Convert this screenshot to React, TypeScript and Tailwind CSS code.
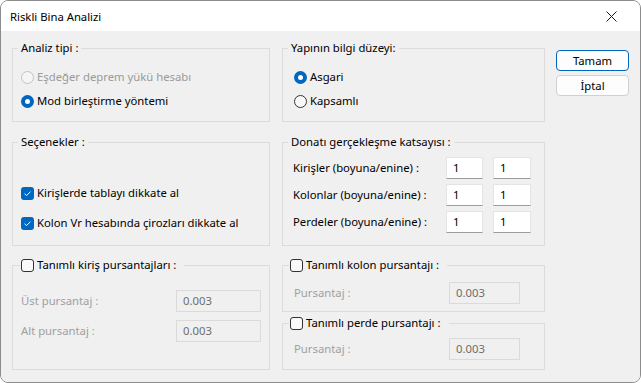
import React from "react";

const font = { fontFamily: '"Noto Sans", "Open Sans", sans-serif' };

function Radio({ checked, disabled }: { checked?: boolean; disabled?: boolean }) {
  if (checked)
    return (
      <span className="w-[13px] h-[13px] rounded-full bg-[#0067c0] flex items-center justify-center shrink-0">
        <span className="w-[5px] h-[5px] rounded-full bg-white" />
      </span>
    );
  return (
    <span
      className={
        "w-[13px] h-[13px] rounded-full border shrink-0 " +
        (disabled ? "border-[#c2c2c2] bg-[#f5f5f5]" : "border-[#333333] bg-[#f9f9f9]")
      }
    />
  );
}

function Check({ checked }: { checked?: boolean }) {
  if (checked)
    return (
      <span className="w-[13px] h-[13px] rounded-[3px] bg-[#0067c0] flex items-center justify-center shrink-0">
        <svg width="13" height="13" viewBox="0 0 13 13">
          <path d="M3.6 6.7 L5.6 8.6 L9.5 4.6" stroke="white" strokeWidth="1" fill="none" />
        </svg>
      </span>
    );
  return <span className="w-[13px] h-[13px] rounded-[3px] border border-[#333333] bg-[#f9f9f9] shrink-0" />;
}

function Field({
  children,
  legend,
  className,
  legendClass,
}: {
  children: React.ReactNode;
  legend: React.ReactNode;
  className?: string;
  legendClass?: string;
}) {
  return (
    <fieldset className={"border border-[#dcdcdc] m-0 p-0 min-w-0 " + (className || "")}>
      <legend className={"h-[16px] leading-[16px] flex items-center " + (legendClass || "ml-[5px] px-[3px]")}>{legend}</legend>
      {children}
    </fieldset>
  );
}

function Input({ value, disabled, className }: { value: string; disabled?: boolean; className?: string }) {
  return (
    <div
      className={
        "h-[22px] flex items-center px-[6px] border " +
        (disabled
          ? "bg-[#f0f0f0] border-[#dadada] text-[#6d6d6d]"
          : "bg-white border-[#e4e4e4] border-b-[#9c9c9c] text-black") +
        " " +
        (className || "")
      }
    >
      {value}
    </div>
  );
}

export default function App() {
  return (
    <div
      style={font}
      className="w-[641px] h-[383px] border border-[#8c8c8c] rounded-[8px] overflow-hidden flex flex-col text-[11.3px] leading-[16px] text-black bg-[#f0f0f0]"
    >
      <div className="h-[30px] bg-white flex items-center justify-between pl-[9px] pr-[23px] shrink-0">
        <span className="pt-[1px]">Riskli Bina Analizi</span>
        <svg width="11" height="11" viewBox="0 0 11 11">
          <path d="M0.5 0.5 L10.5 10.5 M10.5 0.5 L0.5 10.5" stroke="#1a1a1a" strokeWidth="1" />
        </svg>
      </div>
      <div className="flex-1 bg-[#f0f0f0] pt-[9px] pl-[11px] flex">
        {/* Left column */}
        <div className="w-[258px] flex flex-col">
          <Field legend="Analiz tipi :" className="h-[82px]">
            <div className="flex flex-col pt-[9px] pl-[8px]">
              <div className="h-[24px] flex items-center gap-[3px] text-[#9a9a9a]">
                <Radio disabled />
                <span>Eşdeğer deprem yükü hesabı</span>
              </div>
              <div className="h-[24px] flex items-center gap-[3px]">
                <Radio checked />
                <span>Mod birleştirme yöntemi</span>
              </div>
            </div>
          </Field>
          <Field legend="Seçenekler :" className="h-[112px] mt-[12px]">
            <div className="flex flex-col pt-[28px] pl-[8px]">
              <div className="h-[30px] flex items-center gap-[3px]">
                <Check checked />
                <span>Kirişlerde tablayı dikkate al</span>
              </div>
              <div className="h-[30px] flex items-center gap-[3px]">
                <Check checked />
                <span>Kolon Vr hesabında çirozları dikkate al</span>
              </div>
            </div>
          </Field>
          <Field
            legend={
              <span className="flex items-center gap-[3px]">
                <Check />
                <span>Tanımlı kiriş pursantajları :</span>
              </span>
            }
            legendClass="ml-[7px] pl-[1px] pr-[8px]"
            className="h-[113px] mt-[11px]"
          >
            <div className="flex flex-col gap-[8px] pt-[17px] pl-[8px] text-[#a0a0a0]">
              <div className="h-[22px] flex items-center">
                <span className="w-[155px]">Üst pursantaj :</span>
                <Input value="0.003" disabled className="w-[85px]" />
              </div>
              <div className="h-[22px] flex items-center">
                <span className="w-[155px]">Alt pursantaj :</span>
                <Input value="0.003" disabled className="w-[85px]" />
              </div>
            </div>
          </Field>
        </div>
        {/* Right column */}
        <div className="w-[263px] ml-[12px] flex flex-col">
          <Field legend="Yapının bilgi düzeyi:" legendClass="ml-[5px] px-[3px]" className="h-[82px]">
            <div className="flex flex-col pt-[9px] pl-[11px]">
              <div className="h-[24px] flex items-center gap-[3px]">
                <Radio checked />
                <span>Asgari</span>
              </div>
              <div className="h-[24px] flex items-center gap-[3px]">
                <Radio />
                <span>Kapsamlı</span>
              </div>
            </div>
          </Field>
          <Field legend="Donatı gerçekleşme katsayısı :" className="h-[112px] mt-[12px]">
            <div className="flex flex-col gap-[5px] pt-[7px] pl-[10px]">
              {["Kirişler (boyuna/enine) :", "Kolonlar (boyuna/enine) :", "Perdeler (boyuna/enine) :"].map((l) => (
                <div key={l} className="h-[22px] flex items-center">
                  <span className="w-[153px]">{l}</span>
                  <Input value="1" className="w-[37px]" />
                  <Input value="1" className="w-[38px] ml-[10px]" />
                </div>
              ))}
            </div>
          </Field>
          <Field
            legend={
              <span className="flex items-center gap-[3px]">
                <Check />
                <span>Tanımlı kolon pursantajı :</span>
              </span>
            }
            legendClass="ml-[6px] pl-[1px] pr-[8px]"
            className="h-[55px] mt-[11px]"
          >
            <div className="pt-[9px] pl-[11px] h-[22px] box-content flex items-center text-[#a0a0a0]">
              <span className="w-[155px]">Pursantaj :</span>
              <Input value="0.003" disabled className="w-[71px]" />
            </div>
          </Field>
          <Field
            legend={
              <span className="flex items-center gap-[3px]">
                <Check />
                <span>Tanımlı perde pursantajı :</span>
              </span>
            }
            legendClass="ml-[6px] pl-[1px] pr-[8px]"
            className="h-[55px] mt-[3px]"
          >
            <div className="pt-[7px] pl-[11px] h-[22px] box-content flex items-center text-[#a0a0a0]">
              <span className="w-[155px]">Pursantaj :</span>
              <Input value="0.003" disabled className="w-[71px]" />
            </div>
          </Field>
        </div>
        {/* Buttons */}
        <div className="w-[73px] ml-[11px] flex flex-col gap-[4px] pt-[10px]">
          <button className="h-[21px] rounded-[4px] border border-[#0067c0] bg-[#fdfdfd] leading-[16px] flex items-center justify-center">
            Tamam
          </button>
          <button className="h-[21px] rounded-[4px] border border-[#d0d0d0] bg-[#fdfdfd] leading-[16px] flex items-center justify-center">
            İptal
          </button>
        </div>
      </div>
    </div>
  );
}
